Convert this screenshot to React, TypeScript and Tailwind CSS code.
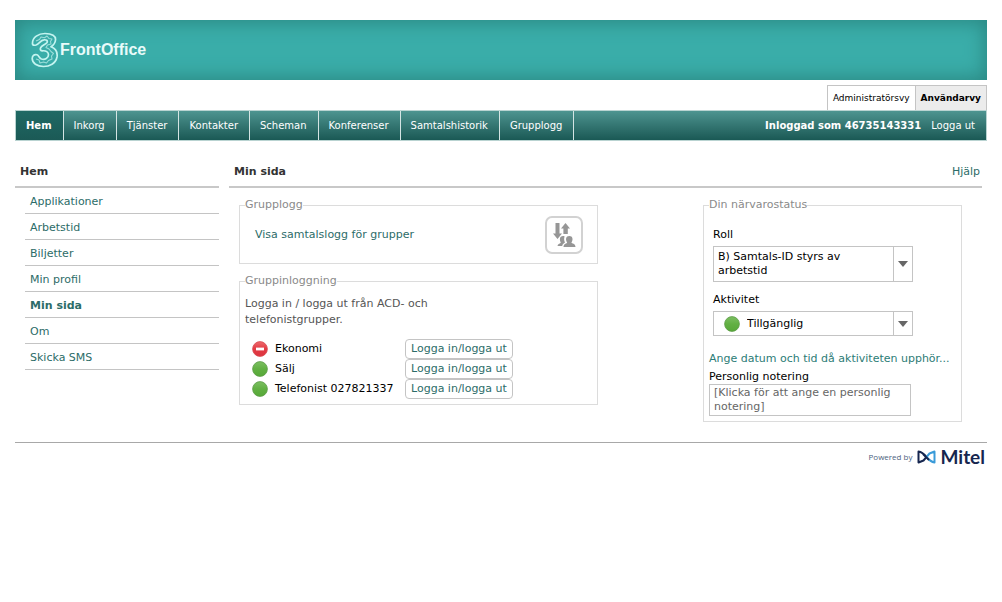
import React, { useState } from "react";

interface Group {
  name: string;
  status: "available" | "busy";
}

const navItems = ["Hem", "Inkorg", "Tjänster", "Kontakter", "Scheman", "Konferenser", "Samtalshistorik", "Grupplogg"];

const sideItems = ["Applikationer", "Arbetstid", "Biljetter", "Min profil", "Min sida", "Om", "Skicka SMS"];

const groups: Group[] = [
  { name: "Ekonomi", status: "busy" },
  { name: "Sälj", status: "available" },
  { name: "Telefonist 027821337", status: "available" },
];

function BrandMark() {
  return (
    <svg width="28" height="36" viewBox="0 0 28 36" fill="none" strokeLinejoin="round" aria-hidden="true">
      <path
        d="M1.5 12C1 5 8 1.5 14 1.5C21 1.5 25 4 24.5 8C24.2 11.5 22 13.5 20 14.8C24.5 16.5 26.8 20 26 25C24.8 31.5 18.5 34.5 12.5 34.5C6 34.5 1.2 31 1.2 26.5C1.2 23.5 3.5 22 6 22.8C8 23.5 8 26 10.5 27C14 28 17.5 26 17.5 22.8C17.5 20 15 18.5 11.5 18.8C9.5 18.8 9 17.5 9.5 16C10.5 13 14.5 12.8 16 10.5C17 8.5 15 7.5 13 7.8C9.5 8.2 8 12 5 13C3.2 13.5 1.7 13.2 1.5 12Z"
        stroke="#c4f4f0"
        strokeWidth="1.7"
      />
      <path
        d="M5 9L8.5 7.5L10 5L13.5 5.8L16 4L18 6.5L21 7L19.5 9.5L20 12L16.5 13L15 15.5L18 17L20 19.5L22.5 21.5L20.5 24L21 27L17.5 28.5L15.5 31L12.5 30L9 31L8 28L5 27"
        stroke="#9bdeda"
        strokeWidth="1.1"
      />
    </svg>
  );
}

function StatusIcon({ status }: { status: Group["status"] }) {
  const busy = status === "busy";
  return (
    <svg width="16" height="16" viewBox="0 0 16 16" className="block" aria-hidden="true">
      <defs>
        <linearGradient id={`fill-${status}`} x1="0" y1="0" x2="0" y2="1">
          <stop offset="0" stopColor={busy ? "#ee6a6e" : "#7cbf62"} />
          <stop offset="0.5" stopColor={busy ? "#e23a43" : "#62b043"} />
          <stop offset="1" stopColor={busy ? "#dc3540" : "#57a838"} />
        </linearGradient>
      </defs>
      <circle cx="8" cy="8" r="7.4" fill={`url(#fill-${status})`} stroke={busy ? "#d84a50" : "#5d9d48"} strokeWidth="0.8" />
      {busy && <rect x="4" y="6.6" width="8" height="2.8" fill="#fff" />}
    </svg>
  );
}

function GroupLogIcon() {
  return (
    <svg width="26" height="28" viewBox="0 0 26 28" fill="#969696" className="shrink-0" aria-hidden="true">
      <path d="M4.5 2H8.5V12.5H11L6.5 18L2 12.5H4.5Z" />
      <path d="M14.5 2L19 7.5H16.8V13H12.4V7.5H10Z" />
      <path d="M16.2 21.8C14.2 18.5 14.8 15 18.3 15C21.8 15 22.4 18.5 20.4 21.8C22.5 23 24.3 23 24.5 26H12.5C12.7 23 14.5 23 16.2 21.8Z" />
      <path d="M13.6 15.4C12.8 17.4 13 19.4 14 21.6C12.5 22.5 11.5 23.3 11.2 25H6.5C6.8 23 8.5 22.8 9.8 21.8C8.6 19.4 8.6 17 9.8 15.8C11 14.8 12.6 14.8 13.6 15.4Z" />
    </svg>
  );
}

function ArrowBox() {
  return (
    <span className="pointer-events-none absolute inset-y-0 right-0 flex w-5 items-center justify-center border-x border-[#c4c4c4]">
      <svg width="10" height="6" viewBox="0 0 10 6" fill="#666" aria-hidden="true">
        <path d="M0 0H10L5 6Z" />
      </svg>
    </span>
  );
}

function Panel({ title, className = "", children }: { title: string; className?: string; children: React.ReactNode }) {
  return (
    <fieldset className={`border border-[#dcdcdc] px-[5px] ${className}`}>
      <legend className="leading-4 text-[#8a8a8a]">{title}</legend>
      {children}
    </fieldset>
  );
}

export default function App() {
  const [role, setRole] = useState("styrs");
  const [activity, setActivity] = useState("available");
  const [note, setNote] = useState("");

  return (
    <div className="px-[15px] pt-5 text-[11px] leading-4 text-[#555] [font-family:Verdana,'DejaVu_Sans',sans-serif]">
      <header className="flex h-[60px] items-center gap-px bg-[#3aada9] pl-4 shadow-[inset_0_0_18px_3px_#2b8984]">
        <BrandMark />
        <span className="text-[16px] font-bold text-[#e9fbfa] [font-family:'Liberation_Sans',sans-serif]">FrontOffice</span>
      </header>

      <div className="mt-[5px] flex h-[25px] justify-end text-[9px] text-black">
        <a href="#admin" className="flex items-center border border-b-0 border-[#c4c4c4] px-[5px]">
          Administratörsvy
        </a>
        <a href="#user" className="flex items-center border border-b-0 border-l-0 border-[#c4c4c4] bg-[#ececec] px-[5px] font-bold">
          Användarvy
        </a>
      </div>

      <nav className="flex h-[31px] items-stretch border border-[#b9d3d1] bg-linear-to-b from-[#4d9490] to-[#1a5955] text-[10px] text-white">
        {navItems.map((item) => (
          <a
            key={item}
            href="#"
            className={`flex items-center border-r border-[#d3e4e3] pr-[11px] pl-[10px] ${
              item === "Hem" ? "bg-linear-to-b from-[#1f6964] to-[#1b5a56] font-bold" : ""
            }`}
          >
            {item}
          </a>
        ))}
        <div className="ml-auto flex items-center gap-[10px] pr-[11px]">
          <span className="font-bold">Inloggad som 46735143331</span>
          <a href="#logout">Logga ut</a>
        </div>
      </nav>

      <div className="mt-[15px] flex gap-[10px] pr-[5px]">
        <aside className="w-[204px] shrink-0">
          <h2 className="border-b-2 border-[#c8c8c8] px-[5px] pt-2 pb-[6px] font-bold text-[#333]">Hem</h2>
          <ul className="pl-[10px]">
            {sideItems.map((item) => (
              <li key={item} className="border-b border-[#c4c4c4]">
                <a
                  href="#"
                  className={`block px-[5px] pt-[6px] pb-[3px] text-[#2c6c68] ${item === "Min sida" ? "font-bold" : ""}`}
                >
                  {item}
                </a>
              </li>
            ))}
          </ul>
        </aside>

        <main className="flex-1">
          <div className="flex justify-between border-b-2 border-[#c8c8c8] pt-2 pr-[2px] pb-[6px] pl-[5px]">
            <h1 className="font-bold text-[#333]">Min sida</h1>
            <a href="#help" className="text-[#2c6c68]">Hjälp</a>
          </div>

          <div className="flex items-start justify-between pt-[9px] pr-5 pl-[10px]">
            <div className="flex w-[359px] flex-col gap-[9px]">
              <Panel title="Grupplogg" className="pb-[9px]">
                <div className="flex items-center justify-between pt-[3px] pr-[9px] pl-[10px]">
                  <a href="#log" className="text-[#2c6c68]">Visa samtalslogg för grupper</a>
                  <button
                    aria-label="Grupplogg"
                    className="flex size-[38px] items-center justify-center rounded-[7px] border-2 border-[#d2d2d2] bg-white"
                  >
                    <GroupLogIcon />
                  </button>
                </div>
              </Panel>

              <Panel title="Gruppinloggning" className="pb-[5px]">
                <p className="w-[220px] pt-[7px]">Logga in / logga ut från ACD- och telefonistgrupper.</p>
                <table className="mt-[11px] ml-[7px] text-black">
                  <tbody>
                    {groups.map((group) => (
                      <tr key={group.name}>
                        <td className="w-[23px] p-0">
                          <StatusIcon status={group.status} />
                        </td>
                        <td className="w-[130px] p-0">{group.name}</td>
                        <td className="p-0">
                          <button className="block h-5 rounded-[4px] border border-[#c4c4c4] bg-white px-[5px] text-[#2c6c68]">
                            Logga in/logga ut
                          </button>
                        </td>
                      </tr>
                    ))}
                  </tbody>
                </table>
              </Panel>
            </div>

            <Panel title="Din närvarostatus" className="w-[259px] pb-[5px]">
              <div className="px-1 pt-[14px] text-black">
                <label htmlFor="role" className="block">Roll</label>
                <div className="relative mt-[3px] w-[200px]">
                  <select
                    id="role"
                    value={role}
                    onChange={(e) => setRole(e.target.value)}
                    className="block h-9 w-full appearance-none border border-[#c4c4c4] bg-white pr-6 pl-1 leading-[14px] whitespace-normal"
                  >
                    <option value="styrs">B) Samtals-ID styrs av arbetstid</option>
                  </select>
                  <ArrowBox />
                </div>

                <label htmlFor="activity" className="mt-[10px] block">Aktivitet</label>
                <div className="relative mt-[3px] w-[200px]">
                  <select
                    id="activity"
                    value={activity}
                    onChange={(e) => setActivity(e.target.value)}
                    className="block h-[25px] w-full appearance-none border border-[#c4c4c4] bg-white pr-6 pl-[33px] leading-[14px]"
                  >
                    <option value="available">Tillgänglig</option>
                  </select>
                  <span className="pointer-events-none absolute inset-y-0 left-[11px] flex items-center">
                    <StatusIcon status="available" />
                  </span>
                  <ArrowBox />
                </div>
              </div>

              <a href="#end" className="mt-[15px] block whitespace-nowrap text-[#2c7c76]">Ange datum och tid då aktiviteten upphör...</a>
              <label htmlFor="note" className="mt-[3px] block leading-[14px] text-black">Personlig notering</label>
              <textarea
                id="note"
                rows={2}
                value={note}
                onChange={(e) => setNote(e.target.value)}
                placeholder="[Klicka för att ange en personlig notering]"
                className="block h-8 w-[202px] resize-none overflow-hidden border border-[#c4c4c4] px-1 py-px leading-[14px] placeholder:text-[#666]"
              />
            </Panel>
          </div>
        </main>
      </div>

      <footer className="mt-5 flex items-center justify-end gap-[5px] border-t border-[#a8a8a8] pt-1 pr-[2px]">
        <span className="text-[8px] text-[#4c5f80] [font-family:'Open_Sans',sans-serif]">Powered by</span>
        <span className="flex items-center gap-1">
          <svg width="19" height="14" viewBox="0 0 19 14" fill="none" strokeWidth="2" strokeLinejoin="round" aria-hidden="true">
            <path d="M9.5 7L6.5 10.5L1.5 12.5V1.5C5 2 7 4 9.5 7" stroke="#16264f" />
            <path d="M9.5 7L12.5 3.5L17.5 1.5V12.5C15 12 12.5 10.5 9.5 7" stroke="#3a9bd9" />
            <path d="M6 4L12 10" stroke="#16264f" />
          </svg>
          <span className="text-[19px] leading-5 font-bold text-[#16264f] [font-family:Lato,sans-serif]">Mitel</span>
        </span>
      </footer>
    </div>
  );
}
